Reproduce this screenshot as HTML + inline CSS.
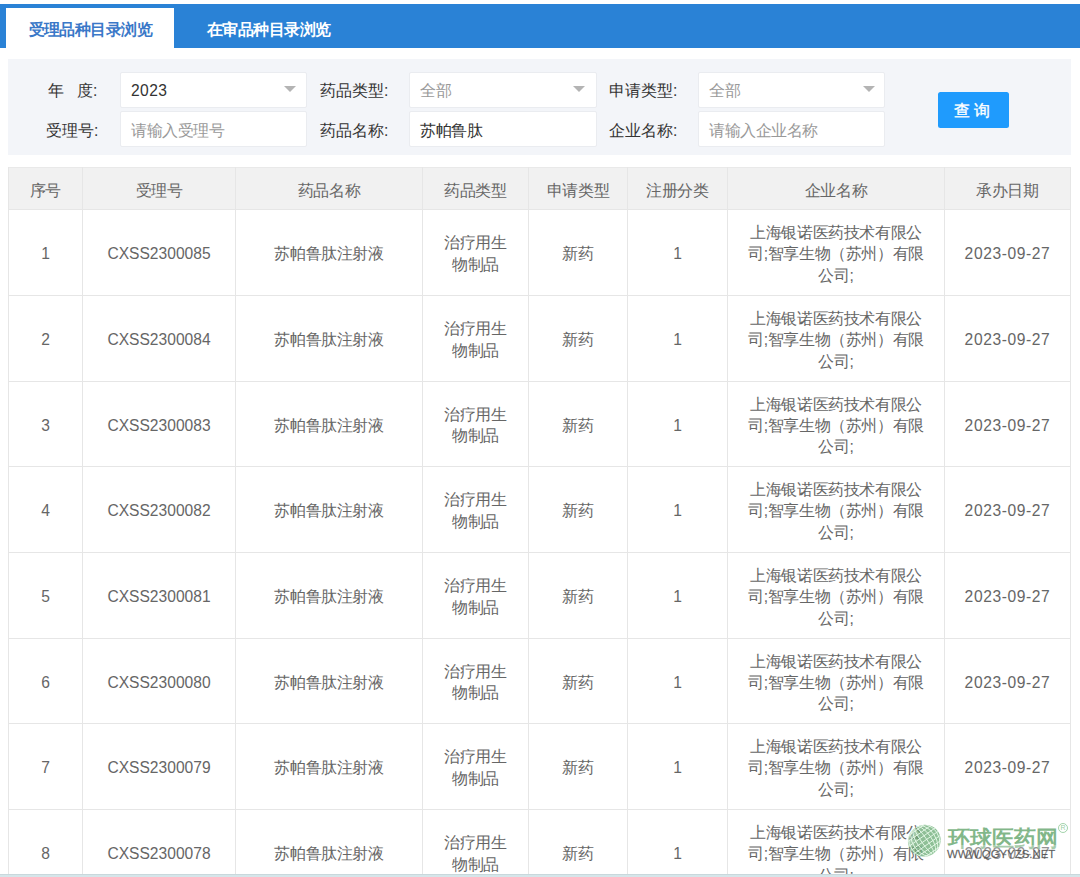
<!DOCTYPE html><html><head><meta charset='utf-8'><style>
*{margin:0;padding:0;box-sizing:border-box}
html,body{width:1080px;height:877px;overflow:hidden;background:#fff}
body{position:relative;font-family:"Liberation Sans",sans-serif;color:#666}
.a{position:absolute}
.bar{left:0;top:4px;width:1080px;height:44px;background:#2a82d6}
.tab1{left:6px;top:8px;width:168px;height:40px;background:#fff}
.tabt{top:9.5px;height:40px;line-height:40px;letter-spacing:-0.55px;font-size:15.6px;font-weight:bold;white-space:nowrap}
.panel{left:8px;top:59px;width:1063px;height:96px;background:#f3f5f9}
.lbl{font-size:15.6px;color:#333;height:36px;line-height:39px;white-space:nowrap}
.inp{background:#fff;border:1px solid #eaecf0;border-radius:2px;height:36px}
.it{font-size:15.6px;line-height:38.5px;letter-spacing:-0.5px;padding-left:11px;white-space:nowrap}
.arr{width:0;height:0;border-left:6px solid transparent;border-right:6px solid transparent;border-top:6px solid #b4b4b4}
.btn{left:938px;top:92.3px;width:71px;height:35.7px;background:#1f9bfd;border-radius:2.5px;color:#fff;font-size:16px;font-weight:normal;-webkit-text-stroke:0.35px #fff;line-height:38px;text-align:center;letter-spacing:4px;padding-left:1px}
.hd{left:8px;top:167px;width:1063px;height:42px;background:#f1f1f1;border-top:1px solid #e9e9e9}
.vl{width:1px;background:#e6e6e6}
.hl{height:1px;background:#e6e6e6}
.c{text-align:center;white-space:nowrap;font-size:15.6px;letter-spacing:-0.4px}
.n{letter-spacing:0}
.d{letter-spacing:0.6px}
</style></head><body><div class='a bar'></div><div class='a tab1'></div><div class='a tabt' style='left:28.5px;color:#3a78c8'>受理品种目录浏览</div><div class='a tabt' style='left:207px;color:#fff'>在审品种目录浏览</div><div class='a panel'></div><div class='a lbl' style='left:48px;top:71px'>年&nbsp;&nbsp;&nbsp;度:</div><div class='a lbl' style='left:46px;top:111px'>受理号:</div><div class='a lbl' style='left:320px;top:71px'>药品类型:</div><div class='a lbl' style='left:320px;top:111px'>药品名称:</div><div class='a lbl' style='left:609px;top:71px'>申请类型:</div><div class='a lbl' style='left:609px;top:111px'>企业名称:</div><div class='a inp' style='left:119.5px;top:71.5px;width:187.5px'></div><div class='a inp' style='left:119.5px;top:110.8px;width:187.5px'></div><div class='a inp' style='left:408.5px;top:71.5px;width:188px'></div><div class='a inp' style='left:408.5px;top:110.8px;width:188px'></div><div class='a inp' style='left:698px;top:71.5px;width:187px'></div><div class='a inp' style='left:698px;top:110.8px;width:187px'></div><div class='a it' style='left:120px;top:72px;color:#333;letter-spacing:0.4px'>2023</div><div class='a it' style='left:120px;top:112px;color:#999'>请输入受理号</div><div class='a it' style='left:408.5px;top:72px;padding-left:11.5px;color:#999'>全部</div><div class='a it' style='left:408.5px;top:112px;padding-left:11.5px;color:#333'>苏帕鲁肽</div><div class='a it' style='left:698px;top:72px;color:#999'>全部</div><div class='a it' style='left:698px;top:112px;color:#999'>请输入企业名称</div><div class='a arr' style='left:284px;top:86px'></div><div class='a arr' style='left:573px;top:86px'></div><div class='a arr' style='left:863px;top:86px'></div><div class='a btn'>查询</div><div class='a hd'></div><div class='a c' style='left:8px;width:75px;top:169.5px;height:42px;line-height:42px'>序号</div><div class='a c' style='left:82px;width:154px;top:169.5px;height:42px;line-height:42px'>受理号</div><div class='a c' style='left:235px;width:188px;top:169.5px;height:42px;line-height:42px'>药品名称</div><div class='a c' style='left:422px;width:107px;top:169.5px;height:42px;line-height:42px'>药品类型</div><div class='a c' style='left:528px;width:100px;top:169.5px;height:42px;line-height:42px'>申请类型</div><div class='a c' style='left:627px;width:101px;top:169.5px;height:42px;line-height:42px'>注册分类</div><div class='a c' style='left:727px;width:218px;top:169.5px;height:42px;line-height:42px'>企业名称</div><div class='a c' style='left:944px;width:127px;top:169.5px;height:42px;line-height:42px'>承办日期</div><div class='a hl' style='left:8px;top:209px;width:1063px'></div><div class='a hl' style='left:8px;top:295px;width:1063px'></div><div class='a hl' style='left:8px;top:381px;width:1063px'></div><div class='a hl' style='left:8px;top:466px;width:1063px'></div><div class='a hl' style='left:8px;top:552px;width:1063px'></div><div class='a hl' style='left:8px;top:638px;width:1063px'></div><div class='a hl' style='left:8px;top:723px;width:1063px'></div><div class='a hl' style='left:8px;top:809px;width:1063px'></div><div class='a vl' style='left:8px;top:167px;height:710px'></div><div class='a vl' style='left:82px;top:167px;height:710px'></div><div class='a vl' style='left:235px;top:167px;height:710px'></div><div class='a vl' style='left:422px;top:167px;height:710px'></div><div class='a vl' style='left:528px;top:167px;height:710px'></div><div class='a vl' style='left:627px;top:167px;height:710px'></div><div class='a vl' style='left:727px;top:167px;height:710px'></div><div class='a vl' style='left:944px;top:167px;height:710px'></div><div class='a vl' style='left:1070px;top:167px;height:710px'></div><div class='a c n' style='left:8px;width:75px;top:243.10px;line-height:21.8px'>1</div><div class='a c n' style='left:82px;width:154px;top:243.10px;line-height:21.8px'>CXSS2300085</div><div class='a c' style='left:235px;width:188px;top:243.10px;line-height:21.8px'>苏帕鲁肽注射液</div><div class='a c' style='left:422px;width:107px;top:232.20px;line-height:21.8px'>治疗用生<br>物制品</div><div class='a c' style='left:528px;width:100px;top:243.10px;line-height:21.8px'>新药</div><div class='a c n' style='left:627px;width:101px;top:243.10px;line-height:21.8px'>1</div><div class='a c' style='left:727px;width:218px;top:222.05px;line-height:21.3px'>上海银诺医药技术有限公<br>司;智享生物（苏州）有限<br>公司;</div><div class='a c d' style='left:944px;width:127px;top:243.10px;line-height:21.8px'>2023-09-27</div><div class='a c n' style='left:8px;width:75px;top:329.10px;line-height:21.8px'>2</div><div class='a c n' style='left:82px;width:154px;top:329.10px;line-height:21.8px'>CXSS2300084</div><div class='a c' style='left:235px;width:188px;top:329.10px;line-height:21.8px'>苏帕鲁肽注射液</div><div class='a c' style='left:422px;width:107px;top:318.20px;line-height:21.8px'>治疗用生<br>物制品</div><div class='a c' style='left:528px;width:100px;top:329.10px;line-height:21.8px'>新药</div><div class='a c n' style='left:627px;width:101px;top:329.10px;line-height:21.8px'>1</div><div class='a c' style='left:727px;width:218px;top:308.05px;line-height:21.3px'>上海银诺医药技术有限公<br>司;智享生物（苏州）有限<br>公司;</div><div class='a c d' style='left:944px;width:127px;top:329.10px;line-height:21.8px'>2023-09-27</div><div class='a c n' style='left:8px;width:75px;top:414.60px;line-height:21.8px'>3</div><div class='a c n' style='left:82px;width:154px;top:414.60px;line-height:21.8px'>CXSS2300083</div><div class='a c' style='left:235px;width:188px;top:414.60px;line-height:21.8px'>苏帕鲁肽注射液</div><div class='a c' style='left:422px;width:107px;top:403.70px;line-height:21.8px'>治疗用生<br>物制品</div><div class='a c' style='left:528px;width:100px;top:414.60px;line-height:21.8px'>新药</div><div class='a c n' style='left:627px;width:101px;top:414.60px;line-height:21.8px'>1</div><div class='a c' style='left:727px;width:218px;top:393.55px;line-height:21.3px'>上海银诺医药技术有限公<br>司;智享生物（苏州）有限<br>公司;</div><div class='a c d' style='left:944px;width:127px;top:414.60px;line-height:21.8px'>2023-09-27</div><div class='a c n' style='left:8px;width:75px;top:500.10px;line-height:21.8px'>4</div><div class='a c n' style='left:82px;width:154px;top:500.10px;line-height:21.8px'>CXSS2300082</div><div class='a c' style='left:235px;width:188px;top:500.10px;line-height:21.8px'>苏帕鲁肽注射液</div><div class='a c' style='left:422px;width:107px;top:489.20px;line-height:21.8px'>治疗用生<br>物制品</div><div class='a c' style='left:528px;width:100px;top:500.10px;line-height:21.8px'>新药</div><div class='a c n' style='left:627px;width:101px;top:500.10px;line-height:21.8px'>1</div><div class='a c' style='left:727px;width:218px;top:479.05px;line-height:21.3px'>上海银诺医药技术有限公<br>司;智享生物（苏州）有限<br>公司;</div><div class='a c d' style='left:944px;width:127px;top:500.10px;line-height:21.8px'>2023-09-27</div><div class='a c n' style='left:8px;width:75px;top:586.10px;line-height:21.8px'>5</div><div class='a c n' style='left:82px;width:154px;top:586.10px;line-height:21.8px'>CXSS2300081</div><div class='a c' style='left:235px;width:188px;top:586.10px;line-height:21.8px'>苏帕鲁肽注射液</div><div class='a c' style='left:422px;width:107px;top:575.20px;line-height:21.8px'>治疗用生<br>物制品</div><div class='a c' style='left:528px;width:100px;top:586.10px;line-height:21.8px'>新药</div><div class='a c n' style='left:627px;width:101px;top:586.10px;line-height:21.8px'>1</div><div class='a c' style='left:727px;width:218px;top:565.05px;line-height:21.3px'>上海银诺医药技术有限公<br>司;智享生物（苏州）有限<br>公司;</div><div class='a c d' style='left:944px;width:127px;top:586.10px;line-height:21.8px'>2023-09-27</div><div class='a c n' style='left:8px;width:75px;top:671.60px;line-height:21.8px'>6</div><div class='a c n' style='left:82px;width:154px;top:671.60px;line-height:21.8px'>CXSS2300080</div><div class='a c' style='left:235px;width:188px;top:671.60px;line-height:21.8px'>苏帕鲁肽注射液</div><div class='a c' style='left:422px;width:107px;top:660.70px;line-height:21.8px'>治疗用生<br>物制品</div><div class='a c' style='left:528px;width:100px;top:671.60px;line-height:21.8px'>新药</div><div class='a c n' style='left:627px;width:101px;top:671.60px;line-height:21.8px'>1</div><div class='a c' style='left:727px;width:218px;top:650.55px;line-height:21.3px'>上海银诺医药技术有限公<br>司;智享生物（苏州）有限<br>公司;</div><div class='a c d' style='left:944px;width:127px;top:671.60px;line-height:21.8px'>2023-09-27</div><div class='a c n' style='left:8px;width:75px;top:757.10px;line-height:21.8px'>7</div><div class='a c n' style='left:82px;width:154px;top:757.10px;line-height:21.8px'>CXSS2300079</div><div class='a c' style='left:235px;width:188px;top:757.10px;line-height:21.8px'>苏帕鲁肽注射液</div><div class='a c' style='left:422px;width:107px;top:746.20px;line-height:21.8px'>治疗用生<br>物制品</div><div class='a c' style='left:528px;width:100px;top:757.10px;line-height:21.8px'>新药</div><div class='a c n' style='left:627px;width:101px;top:757.10px;line-height:21.8px'>1</div><div class='a c' style='left:727px;width:218px;top:736.05px;line-height:21.3px'>上海银诺医药技术有限公<br>司;智享生物（苏州）有限<br>公司;</div><div class='a c d' style='left:944px;width:127px;top:757.10px;line-height:21.8px'>2023-09-27</div><div class='a c n' style='left:8px;width:75px;top:843.10px;line-height:21.8px'>8</div><div class='a c n' style='left:82px;width:154px;top:843.10px;line-height:21.8px'>CXSS2300078</div><div class='a c' style='left:235px;width:188px;top:843.10px;line-height:21.8px'>苏帕鲁肽注射液</div><div class='a c' style='left:422px;width:107px;top:832.20px;line-height:21.8px'>治疗用生<br>物制品</div><div class='a c' style='left:528px;width:100px;top:843.10px;line-height:21.8px'>新药</div><div class='a c n' style='left:627px;width:101px;top:843.10px;line-height:21.8px'>1</div><div class='a c' style='left:727px;width:218px;top:822.05px;line-height:21.3px'>上海银诺医药技术有限公<br>司;智享生物（苏州）有限<br>公司;</div><div class='a c d' style='left:944px;width:127px;top:843.10px;line-height:21.8px'>2023-09-27</div><svg class='a' style='left:900px;top:818px' width='48' height='46' viewBox='0 0 48 46'>
<defs><clipPath id='gc'><ellipse cx='24.3' cy='22.8' rx='16.6' ry='15.8' transform='rotate(-30 24.3 22.8)'/></clipPath>
<linearGradient id='gg' x1='0' y1='0.2' x2='1' y2='0.6'><stop offset='0' stop-color='#8cc295' stop-opacity='0.2'/><stop offset='0.4' stop-color='#6aa874' stop-opacity='0.75'/><stop offset='1' stop-color='#78b883' stop-opacity='0.85'/></linearGradient></defs>
<g clip-path='url(#gc)'>
<rect x='0' y='0' width='48' height='46' fill='url(#gg)'/>
<g transform='rotate(-35 24.3 22.8)' stroke='#e2f6e5' stroke-width='0.9' fill='none'>
<ellipse cx='24.3' cy='22.8' rx='2.8' ry='17'/><ellipse cx='24.3' cy='22.8' rx='7.5' ry='17'/><ellipse cx='24.3' cy='22.8' rx='11.5' ry='17'/><ellipse cx='24.3' cy='22.8' rx='15' ry='17'/>
<line x1='0' y1='9.5' x2='48' y2='9.5'/><line x1='0' y1='14' x2='48' y2='14'/><line x1='0' y1='18.5' x2='48' y2='18.5'/><line x1='0' y1='23' x2='48' y2='23'/><line x1='0' y1='27.5' x2='48' y2='27.5'/><line x1='0' y1='32' x2='48' y2='32'/><line x1='0' y1='36.5' x2='48' y2='36.5'/>
</g></g></svg><div class='a' style='left:948px;top:825.5px;font-size:21.5px;line-height:26px;font-weight:bold;color:rgba(108,170,116,0.85);white-space:nowrap;letter-spacing:0px'>环球医药网</div><div class='a' style='left:1058px;top:823px;width:10px;height:10px;border:1px solid rgba(140,200,150,0.8);border-radius:50%;font-size:7px;line-height:8px;text-align:center;color:rgba(140,200,150,0.9)'>R</div><div class='a' style='left:945px;top:845px;width:112px;height:16px;background:rgba(255,255,255,0.3)'></div><div class='a' style='left:947px;top:847px;font-size:11.4px;line-height:14px;color:rgba(75,75,75,0.85);white-space:nowrap;-webkit-text-stroke:0.3px rgba(75,75,75,0.6)'>WWW.QGYYZS.NET</div><div class='a' style='left:0;top:874px;width:1080px;height:3px;background:#d5e6ea;border-top:1px solid #c9d8dc'></div></body></html>
